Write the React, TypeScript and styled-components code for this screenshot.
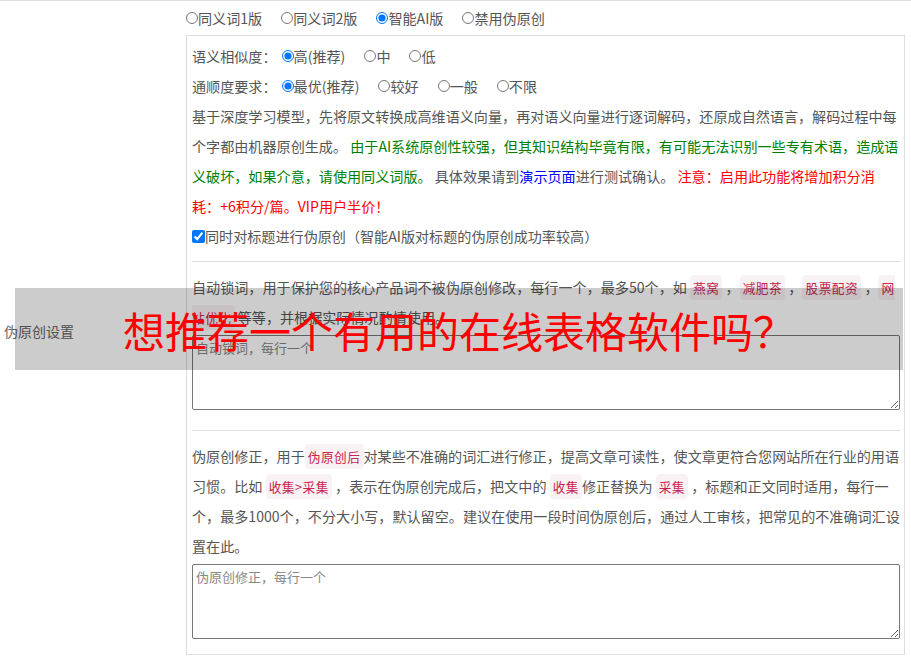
import styled, { createGlobalStyle } from 'styled-components';

const GlobalStyle = createGlobalStyle`
  body {
    margin: 0;
    background: #ffffff;
    font-family: "Noto Sans CJK SC", "Noto Sans", sans-serif;
    text-spacing-trim: space-all;
    text-autospace: no-autospace;
  }
`;

const Page = styled.div`
  position: relative;
  width: 911px;
  height: 658px;
  overflow: hidden;
`;

const SettingRow = styled.div`
  display: grid;
  grid-template-columns: 186px 1fr;
  border-top: 1px solid #dddddd;
`;

const RowLabel = styled.div`
  display: flex;
  align-items: center;
  padding-left: 4px;
  font-size: 14px;
  color: #666666;
`;

const RowBody = styled.div`
  padding-bottom: 6px;
  font-size: 14.1px;
  color: #555555;
`;

const ModeBar = styled.div`
  display: flex;
  align-items: center;
  height: 34px;
`;

const Option = styled.label`
  display: inline-flex;
  align-items: center;
  margin-right: 19px;
  line-height: 30px;
  white-space: nowrap;
`;

const Radio = styled.input.attrs({ type: 'radio' })`
  width: 12px;
  height: 12px;
  margin: 0;
  accent-color: #0075ff;
`;

const Check = styled.input.attrs({ type: 'checkbox' })`
  width: 13px;
  height: 13px;
  margin: 0;
  accent-color: #0075ff;
`;

const Panel = styled.div`
  border: 1px solid #dddddd;
  margin-right: 6px;
  padding: 5px 4px 15px 5px;
`;

const FieldLine = styled.div`
  display: flex;
  align-items: center;
  height: 30px;
`;

const FieldName = styled.span`
  white-space: nowrap;
  margin-right: 5px;
`;

const Text = styled.p`
  margin: 0;
  line-height: 30px;
`;

const Tone = styled.span<{ $color: string }>`
  color: ${(p) => p.$color};
`;

const DemoLink = styled.a`
  color: #0000ff;
  text-decoration: none;
`;

const Code = styled.code`
  font-family: "Noto Sans CJK SC", sans-serif;
  font-size: 90%;
  line-height: 1;
  letter-spacing: 0.5px;
  color: #c7254e;
  background: #f9f2f4;
  border-radius: 4px;
  padding: 3px 3px;
`;

const Divider = styled.hr<{ $top: number }>`
  border: 0;
  border-top: 1px solid #dddddd;
  margin: ${(p) => p.$top}px 0 10px;
`;

const Box = styled.textarea`
  display: block;
  box-sizing: border-box;
  width: 708px;
  height: 75px;
  margin: 3px 0 0;
  padding: 2px 3px;
  border: 1px solid #767676;
  border-radius: 2px;
  font-family: "Noto Sans CJK SC", sans-serif;
  font-size: 13px;
  color: #333333;
  &::placeholder {
    color: #888888;
  }
`;

const Banner = styled.div`
  position: absolute;
  left: 15px;
  top: 288px;
  width: 888px;
  height: 82px;
  background: rgba(0, 0, 0, 0.2);
  display: flex;
  align-items: center;
  justify-content: center;
  font-size: 42px;
  color: #ff0000;
  font-family: "Noto Sans CJK SC", sans-serif;
  white-space: nowrap;
`;

export default function App() {
  return (
    <>
      <GlobalStyle />
      <Page>
        <SettingRow>
          <RowLabel>伪原创设置</RowLabel>
          <RowBody>
            <ModeBar>
              <Option><Radio name="mode" />同义词1版</Option>
              <Option><Radio name="mode" />同义词2版</Option>
              <Option><Radio name="mode" defaultChecked />智能AI版</Option>
              <Option><Radio name="mode" />禁用伪原创</Option>
            </ModeBar>
            <Panel>
              <FieldLine>
                <FieldName>语义相似度：</FieldName>
                <Option><Radio name="sim" defaultChecked />高(推荐)</Option>
                <Option><Radio name="sim" />中</Option>
                <Option><Radio name="sim" />低</Option>
              </FieldLine>
              <FieldLine>
                <FieldName>通顺度要求：</FieldName>
                <Option><Radio name="flu" defaultChecked />最优(推荐)</Option>
                <Option><Radio name="flu" />较好</Option>
                <Option><Radio name="flu" />一般</Option>
                <Option><Radio name="flu" />不限</Option>
              </FieldLine>
              <Text>
                基于深度学习模型，先将原文转换成高维语义向量，再对语义向量进行逐词解码，还原成自然语言，解码过程中每个字都由机器原创生成。{' '}
                <Tone $color="#008000">
                  由于AI系统原创性较强，但其知识结构毕竟有限，有可能无法识别一些专有术语，造成语义破坏，如果介意，请使用同义词版。
                </Tone>{' '}
                具体效果请到<DemoLink href="#">演示页面</DemoLink>进行测试确认。{' '}
                <Tone $color="#ff0000">注意：启用此功能将增加积分消耗：+6积分/篇。VIP用户半价！</Tone>
              </Text>
              <Option><Check defaultChecked />同时对标题进行伪原创（智能AI版对标题的伪原创成功率较高）</Option>
              <Divider $top={10} />
              <Text>
                自动锁词，用于保护您的核心产品词不被伪原创修改，每行一个，最多50个，如 <Code>燕窝</Code> ，<Code>减肥茶</Code> ，<Code>股票配资</Code> ，<Code>网站优化</Code> 等等，并根据实际情况酌情使用。
              </Text>
              <Box placeholder="自动锁词，每行一个" />
              <Divider $top={20} />
              <Text>
                伪原创修正，用于<Code>伪原创后</Code>对某些不准确的词汇进行修正，提高文章可读性，使文章更符合您网站所在行业的用语习惯。比如 <Code>收集&gt;采集</Code> ，表示在伪原创完成后，把文中的 <Code>收集</Code>修正替换为 <Code>采集</Code> ，标题和正文同时适用，每行一个，最多1000个，不分大小写，默认留空。建议在使用一段时间伪原创后，通过人工审核，把常见的不准确词汇设置在此。
              </Text>
              <Box placeholder="伪原创修正，每行一个" />
            </Panel>
          </RowBody>
        </SettingRow>
        <Banner>想推荐一个有用的在线表格软件吗？</Banner>
      </Page>
    </>
  );
}
